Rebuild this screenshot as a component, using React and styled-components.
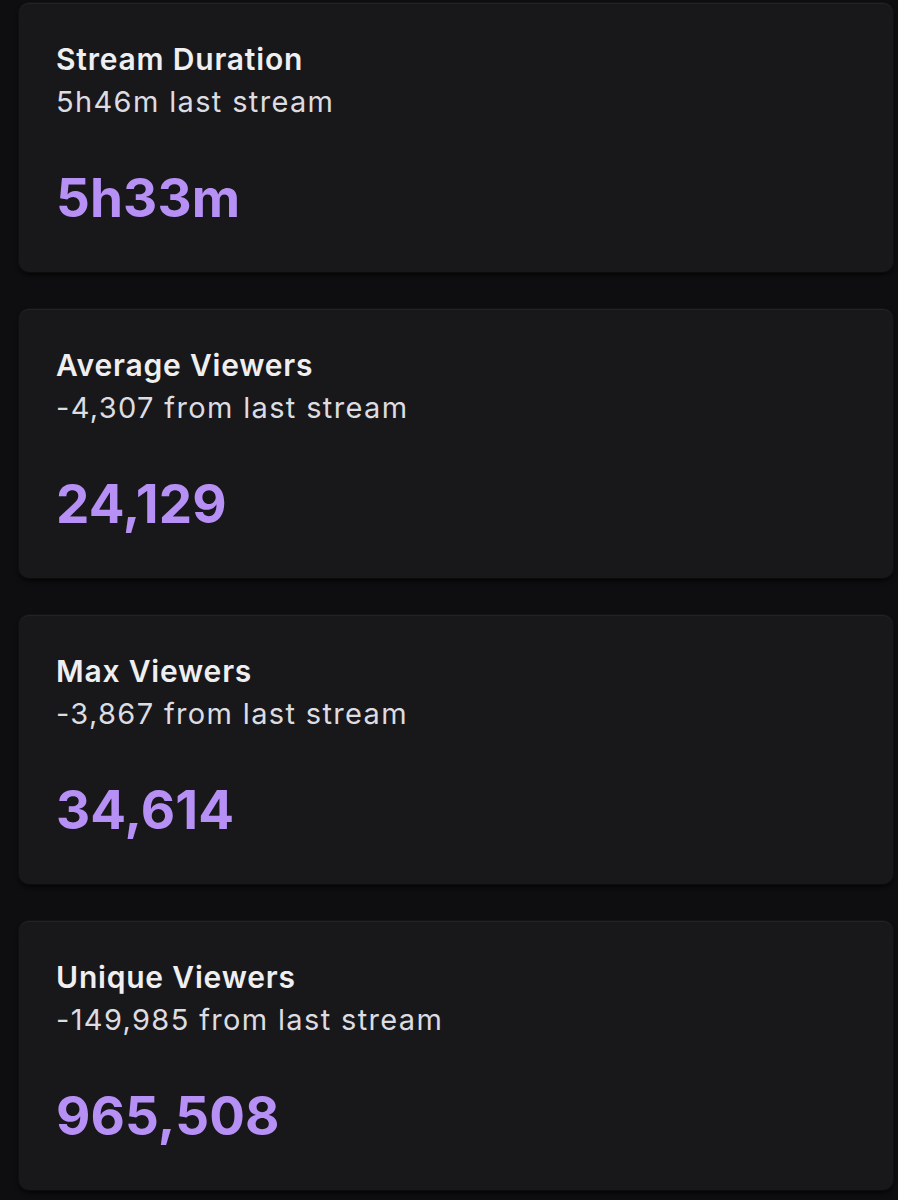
import React from "react";
import styled, { createGlobalStyle } from "styled-components";

const Global = createGlobalStyle`
  html, body { margin: 0; padding: 0; background: #0e0e10; }
  body { font-family: Inter, "Noto Sans", sans-serif; -webkit-font-smoothing: antialiased; }
`;

const Page = styled.div`
  display: flex;
  flex-direction: column;
  gap: 37px;
  padding: 3px 5px 9px 19px;
  background: #0e0e10;
  min-height: 1200px;
  box-sizing: border-box;
`;

const Card = styled.section`
  background: #18181b;
  border-radius: 10px;
  height: 269px;
  box-sizing: border-box;
  padding: 36px 37px 0;
  box-shadow: inset 0 1px 0 rgba(255, 255, 255, 0.05), 0 0 0 1px rgba(255, 255, 255, 0.03), 0 3px 4px rgba(0, 0, 0, 0.7);
`;

const Title = styled.h2`
  margin: 0;
  font-size: 30px;
  line-height: 40px;
  font-weight: 600;
  color: #efeff1;
  letter-spacing: 0.8px;
`;

const Sub = styled.div`
  font-size: 29px;
  line-height: 46px;
  font-weight: 400;
  color: #dcdce1;
  letter-spacing: 1.35px;
`;

const Value = styled.div`
  margin-top: 41px;
  font-size: 53px;
  line-height: 64px;
  font-weight: 700;
  color: #b690f5;
  letter-spacing: 0.1px;
`;

const stats = [
  { title: "Stream Duration", sub: "5h46m last stream", value: "5h33m" },
  { title: "Average Viewers", sub: "-4,307 from last stream", value: "24,129" },
  { title: "Max Viewers", sub: "-3,867 from last stream", value: "34,614" },
  { title: "Unique Viewers", sub: "-149,985 from last stream", value: "965,508" },
];

export default function App() {
  return (
    <>
      <Global />
      <Page>
        {stats.map((s) => (
          <Card key={s.title}>
            <Title>{s.title}</Title>
            <Sub>{s.sub}</Sub>
            <Value>{s.value}</Value>
          </Card>
        ))}
      </Page>
    </>
  );
}
